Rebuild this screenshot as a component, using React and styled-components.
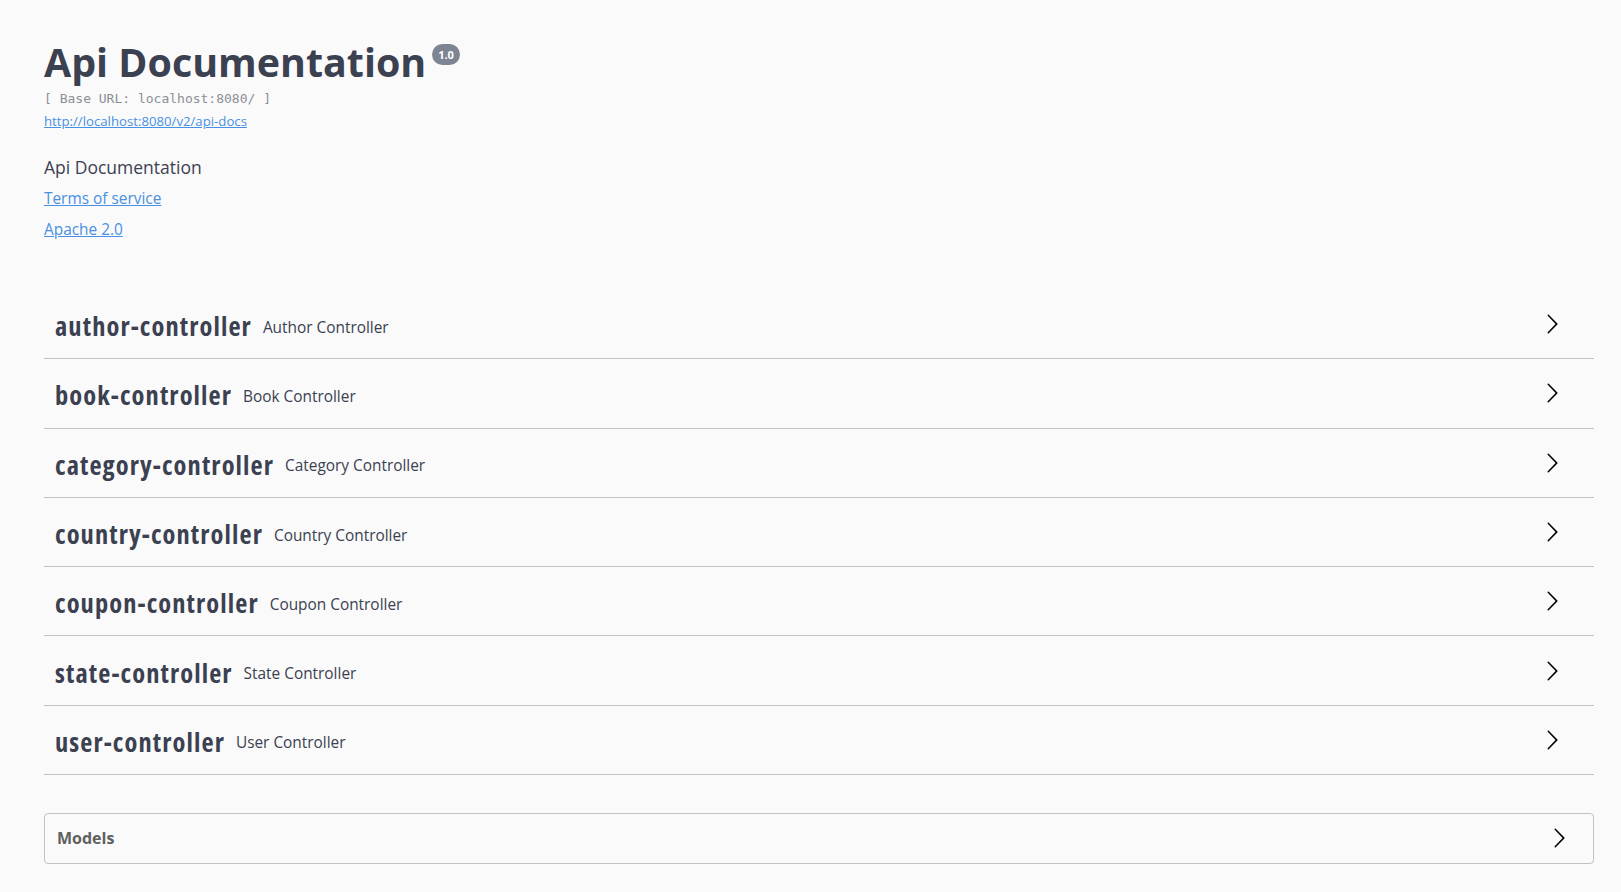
import React from 'react'
import styled, { createGlobalStyle } from 'styled-components'

const GlobalStyle = createGlobalStyle`
  html, body {
    margin: 0;
    padding: 0;
    background: #fafafa;
  }
  body {
    font-family: "Open Sans", "Liberation Sans", sans-serif;
    color: #3b4151;
  }
`

const linkColor = '#4990e2',
  textColor = '#3b4151'

const Page = styled.div`
  width: 1550px;
  padding: 38px 0 30px 44px;
`
const Info = styled.div`
  display: flex;
  flex-direction: column;
  align-items: flex-start;
`
const TitleRow = styled.div`
  display: flex;
  align-items: flex-start;
  gap: 6px;
`
const Title = styled.h2`
  margin: 0;
  font-size: 39.4px;
  line-height: 48px;
  font-weight: 700;
  color: ${textColor};
`
const Version = styled.span`
  margin-top: 6px;
  padding: 2px 6px;
  border-radius: 57px;
  background: #7d8492;
  color: #fff;
  font-size: 11px;
  line-height: 17px;
  font-weight: 700;
`
const BaseUrl = styled.pre`
  margin: 5px 0 0;
  font-family: "DejaVu Sans Mono", "Liberation Mono", monospace;
  font-size: 13px;
  line-height: 16px;
  color: #8b8f98;
`
const Link = styled.a`
  color: ${linkColor};
  text-decoration: underline;
  font-size: ${p => p.size || 15.4}px;
  line-height: ${p => p.lh || 20}px;
  margin-top: ${p => p.mt || 0}px;
  cursor: pointer;
`
const Description = styled.p`
  margin: 25px 0 0;
  font-size: 17.5px;
  line-height: 24px;
  color: ${textColor};
`

const Tags = styled.div`
  margin-top: 50px;
`
const TagRow = styled.div`
  display: flex;
  align-items: center;
  height: 68.3px;
  padding: 0 31px 0 11px;
  border-bottom: 1px solid rgba(59, 65, 81, 0.3);
  cursor: pointer;
`
const TagName = styled.span`
  font-family: "Open Sans", sans-serif;
  font-stretch: 87.5%;
  font-weight: 700;
  font-size: 26.4px;
  letter-spacing: 1.1px;
  color: ${textColor};
  margin-right: 11px;
  padding-top: 4px;
`
const TagDesc = styled.small`
  flex: 1;
  font-size: 15.4px;
  color: ${textColor};
  padding-top: 6px;
`
const Arrow = ({ size = 22 }) => (
  <svg width={size} height={size} viewBox="0 0 20 20" fill="#000">
    <path d="M13.25 10L6.109 2.58a.697.697 0 0 1 0-.979.68.68 0 0 1 .969 0l7.83 7.908a.697.697 0 0 1 0 .979l-7.83 7.908a.68.68 0 0 1-.969 0 .697.697 0 0 1 0-.979L13.25 10z" />
  </svg>
)

const Models = styled.div`
  margin-top: 37.5px;
  height: 49px;
  border: 1px solid rgba(59, 65, 81, 0.3);
  border-radius: 4px;
  display: flex;
  align-items: center;
  justify-content: space-between;
  padding: 0 23px 0 12px;
`
const ModelsTitle = styled.h4`
  margin: 0;
  font-size: 16px;
  font-weight: 700;
  color: #606060;
`

const tags = [
  ['author-controller', 'Author Controller'],
  ['book-controller', 'Book Controller'],
  ['category-controller', 'Category Controller'],
  ['country-controller', 'Country Controller'],
  ['coupon-controller', 'Coupon Controller'],
  ['state-controller', 'State Controller'],
  ['user-controller', 'User Controller'],
]

export default function App() {
  return (
    <>
      <GlobalStyle />
      <Page>
        <Info>
          <TitleRow>
            <Title>Api Documentation</Title>
            <Version>1.0</Version>
          </TitleRow>
          <BaseUrl>[ Base URL: localhost:8080/ ]</BaseUrl>
          <Link size={13.2} lh={18} mt={5}>
            http://localhost:8080/v2/api-docs
          </Link>
          <Description>Api Documentation</Description>
          <Link mt={10}>Terms of service</Link>
          <Link mt={11}>Apache 2.0</Link>
        </Info>
        <Tags>
          {tags.map(([name, desc]) => (
            <TagRow key={name}>
              <TagName>{name}</TagName>
              <TagDesc>{desc}</TagDesc>
              <Arrow />
            </TagRow>
          ))}
        </Tags>
        <Models>
          <ModelsTitle>Models</ModelsTitle>
          <Arrow />
        </Models>
      </Page>
    </>
  )
}
